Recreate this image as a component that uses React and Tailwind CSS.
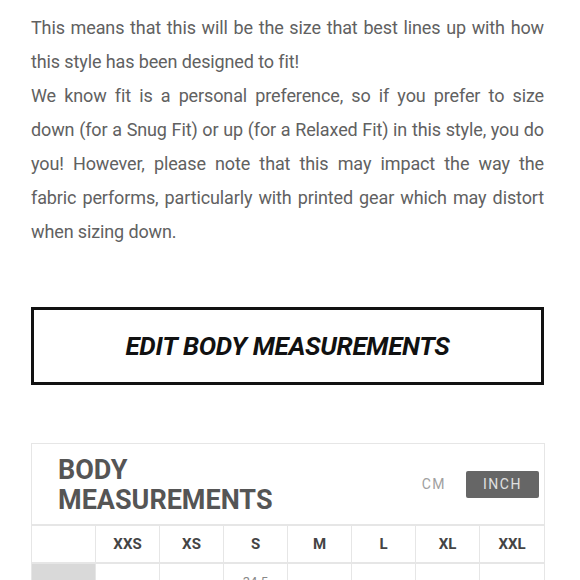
import React from 'react';

const sizes = ['XXS', 'XS', 'S', 'M', 'L', 'XL', 'XXL'];

export default function App() {
  return (
    <div className="min-h-screen bg-white px-[31px] pt-[11px]" style={{ fontFamily: 'Roboto, "Liberation Sans", sans-serif' }}>
      <div className="w-[513px] text-[18px] leading-[34px] tracking-[-0.12px] text-[#616161] text-justify">
        <p>This means that this will be the size that best lines up with how this style has been designed to fit!</p>
        <p>We know fit is a personal preference, so if you prefer to size down (for a Snug Fit) or up (for a Relaxed Fit) in this style, you do you! However, please note that this may impact the way the fabric performs, particularly with printed gear which may distort when sizing down.</p>
      </div>

      <button className="mt-[58px] w-[513px] h-[78px] border-[3px] border-[#111] flex items-center justify-center text-[26px] font-bold italic text-[#111] tracking-[-0.3px]">
        EDIT BODY MEASUREMENTS
      </button>

      <div className="mt-[58px] w-[514px] border border-[#e6e6e6]">
        <div className="h-[82px] flex items-center justify-between pl-[26px] pr-[5px] border-b-2 border-[#e6e6e6]">
          <h2 className="text-[27px] leading-[30px] font-bold text-[#555] pt-[1px]">BODY<br />MEASUREMENTS</h2>
          <div className="flex items-center">
            <span className="text-[14px] tracking-[1.5px] text-[#a0a0a0] mr-[20px]">CM</span>
            <span className="w-[73px] h-[27px] rounded-[2px] bg-[#666] text-[#e0e0e0] text-[14px] tracking-[1.5px] flex items-center justify-center">INCH</span>
          </div>
        </div>
        <div className="grid grid-cols-8">
          <div className="h-[36px] border-r border-[#e6e6e6]"></div>
          {sizes.map((s, i) => (
            <div key={s} className={`h-[36px] flex items-center justify-center text-[15px] font-bold text-[#444] ${i < 6 ? 'border-r border-[#e6e6e6]' : ''}`}>{s}</div>
          ))}
        </div>
        <div className="grid grid-cols-8 border-t-2 border-[#e6e6e6]">
          <div className="h-[40px] bg-[#d9d9d9] border-r border-[#e6e6e6]"></div>
          {sizes.map((s, i) => (
            <div key={s} className={`h-[40px] flex justify-center pt-[8px] text-[13px] text-[#888] ${i < 6 ? 'border-r border-[#e6e6e6]' : ''}`}>{s === 'S' ? '34.5' : ''}</div>
          ))}
        </div>
      </div>
    </div>
  );
}
